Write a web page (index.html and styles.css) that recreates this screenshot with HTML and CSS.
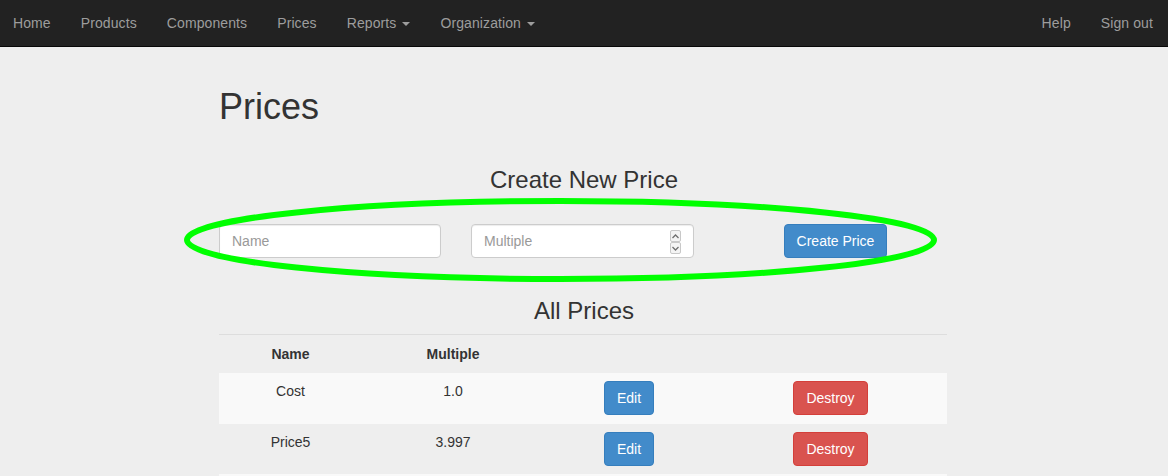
FILE: index.html
```html
<!DOCTYPE html>
<html>
<head>
<meta charset="utf-8">
<link rel="stylesheet" href="styles.css">
</head>
<body>
<nav class="navbar">
  <ul class="nav">
    <li><a href="#">Home</a></li>
    <li><a href="#">Products</a></li>
    <li><a href="#">Components</a></li>
    <li><a href="#">Prices</a></li>
    <li><a href="#">Reports <span class="caret"></span></a></li>
    <li><a href="#">Organization <span class="caret"></span></a></li>
  </ul>
  <ul class="nav">
    <li><a href="#">Help</a></li>
    <li><a href="#">Sign out</a></li>
  </ul>
</nav>
<main class="container">
  <h1 class="page-title">Prices</h1>
  <h3 class="section-title">Create New Price</h3>
  <form class="form-row">
    <div class="col"><input class="form-control" type="text" placeholder="Name"></div>
    <div class="col">
      <div class="number-wrap">
        <input class="form-control" type="text" placeholder="Multiple">
        <span class="spinner">
          <span class="spin-btn"><svg width="7" height="5" viewBox="0 0 7 5"><path d="M0.5 4 L3.5 1 L6.5 4" fill="none" stroke="#6f6f6f" stroke-width="1.3"/></svg></span>
          <span class="spin-btn"><svg width="7" height="5" viewBox="0 0 7 5"><path d="M0.5 1 L3.5 4 L6.5 1" fill="none" stroke="#6f6f6f" stroke-width="1.3"/></svg></span>
        </span>
      </div>
    </div>
    <div class="col col-center"><button type="button" class="btn btn-primary">Create Price</button></div>
    <svg class="highlight" width="753" height="86" viewBox="0 0 753 86"><ellipse cx="376.5" cy="43" rx="373.5" ry="39" fill="none" stroke="#00ff00" stroke-width="6"/></svg>
  </form>
  <h3 class="section-title second">All Prices</h3>
  <table class="table">
    <colgroup><col class="c1"><col class="c2"><col class="c3"><col class="c4"></colgroup>
    <thead>
      <tr><th>Name</th><th>Multiple</th><th></th><th></th></tr>
    </thead>
    <tbody>
      <tr class="odd"><td>Cost</td><td>1.0</td><td><button type="button" class="btn btn-primary">Edit</button></td><td><button type="button" class="btn btn-danger">Destroy</button></td></tr>
      <tr><td>Price5</td><td>3.997</td><td><button type="button" class="btn btn-primary">Edit</button></td><td><button type="button" class="btn btn-danger">Destroy</button></td></tr>
    </tbody>
  </table>
</main>
</body>
</html>
```

FILE: styles.css
```css
* { box-sizing: border-box; }
html, body { margin: 0; padding: 0; }
body {
  background: #eeeeee;
  font-family: "Liberation Sans", Arial, Helvetica, sans-serif;
  font-size: 14px;
  line-height: 20px;
  color: #333333;
  overflow: hidden;
}
.navbar {
  display: flex;
  justify-content: space-between;
  height: 47px;
  background: #222222;
  border-bottom: 1px solid #080808;
}
.nav {
  display: flex;
  list-style: none;
  margin: 0;
  padding: 0;
}
.nav:first-child { margin-left: -2px; }
.nav a {
  display: block;
  padding: 13px 15px;
  color: #9d9d9d;
  text-decoration: none;
  line-height: 20px;
  letter-spacing: 0.1px;
}
.caret {
  display: inline-block;
  width: 0;
  height: 0;
  margin-left: 2px;
  vertical-align: middle;
  border-top: 4px solid #9d9d9d;
  border-left: 4px solid transparent;
  border-right: 4px solid transparent;
}
.container {
  width: 730px;
  margin: 0 auto;
  padding-top: 40px;
}
.page-title {
  margin: 0;
  font-size: 36px;
  line-height: 40px;
  font-weight: 500;
}
.section-title {
  margin: 40px 0 0;
  font-size: 24px;
  line-height: 26px;
  font-weight: 500;
  text-align: center;
}
.section-title.second { margin: 40px 0 10px; }
.form-row {
  position: relative;
  display: grid;
  grid-template-columns: 252px 253px 253px;
  margin: 31px -15px 0;
}
.col { padding: 0 15px; }
.col-center { display: flex; justify-content: center; }
.form-control {
  display: block;
  width: 100%;
  height: 34px;
  padding: 6px 12px;
  font-family: inherit;
  font-size: 14px;
  line-height: 20px;
  color: #555;
  background: #fff;
  border: 1px solid #cccccc;
  border-radius: 4px;
  box-shadow: inset 0 1px 1px rgba(0,0,0,0.075);
}
.form-control::placeholder { color: #999999; }
.number-wrap { position: relative; }
.spinner {
  position: absolute;
  right: 13px;
  top: 6px;
  display: flex;
  flex-direction: column;
  width: 11px;
  height: 24px;
}
.spin-btn {
  flex: 1;
  display: flex;
  align-items: center;
  justify-content: center;
  border: 1px solid #c8c8c8;
  border-radius: 2px;
  background: #f4f4f4;
}
.highlight {
  position: absolute;
  left: -20px;
  top: -27px;
  pointer-events: none;
}
.btn {
  display: inline-block;
  height: 34px;
  padding: 6px 12px;
  font-family: inherit;
  font-size: 14px;
  line-height: 20px;
  color: #fff;
  border: 1px solid transparent;
  border-radius: 4px;
  cursor: pointer;
}
.btn-primary { background: #428bca; border-color: #357ebd; }
.btn-danger { background: #d9534f; border-color: #d43f3a; }
.table {
  width: 728px;
  border-collapse: collapse;
  table-layout: fixed;
  border-bottom: 2px solid #f9f9f9;
}
.c1 { width: 143px; }
.c2 { width: 182px; }
.c3 { width: 170px; }
.c4 { width: 233px; }
.table th {
  padding: 8px;
  text-align: center;
  font-weight: bold;
  border-top: 1px solid #dddddd;
  border-bottom: 1px solid transparent;
  height: 38px;
}
.table td {
  padding: 8px;
  text-align: center;
  vertical-align: top;
  border-top: 1px solid transparent;
}
.table tr.odd td { background: #f9f9f9; }
```
